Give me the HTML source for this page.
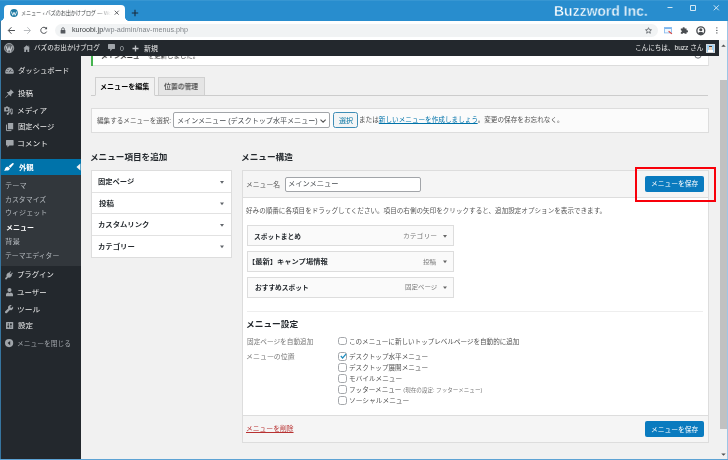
<!DOCTYPE html>
<html lang="ja">
<head>
<meta charset="utf-8">
<title>メニュー ‹ バズのお出かけブログ — WordPress</title>
<style>
html,body{margin:0;padding:0;}
body{width:728px;height:460px;overflow:hidden;position:relative;background:#f1f1f1;
 font-family:"Liberation Sans","Noto Sans CJK JP",sans-serif;font-size:7px;color:#444;}
.a{position:absolute;box-sizing:border-box;}
.t{position:absolute;white-space:nowrap;line-height:1;transform-origin:0 50%;will-change:transform;}
.b{font-weight:bold;}
svg{position:absolute;overflow:visible;}
/* chrome */
#titlebar{left:0;top:0;width:728px;height:21px;background:#288dce;}
#tab{left:4px;top:4.5px;width:121px;height:17.5px;background:#fff;border-radius:4px 4px 0 0;}
#toolbar{left:0;top:21px;width:728px;height:19px;background:#fff;}
#omni{left:54.6px;top:24px;width:603.4px;height:13px;border-radius:7px;background:#f1f3f4;}
/* wp */
#adminbar{left:0;top:40px;width:719px;height:16px;background:#23282d;}
#sidebar{left:0;top:56px;width:80.5px;height:404px;background:#23282d;}
#submenu{left:0;top:175px;width:80.5px;height:91px;background:#32373c;}
#cur{left:0;top:158.5px;width:80.5px;height:16.5px;background:#0073aa;}
.sm{color:#eee;font-size:7.5px;left:18px;}
.ss{color:#b4b9be;font-size:7px;left:6px;}
.box{background:#fff;border:1px solid #ddd;}
.mi{left:247px;width:207px;height:21px;background:#fafafa;border:1px solid #ddd;}
.cb{width:8.8px;height:8.8px;background:#fff;border:1px solid #a4a7ab;border-radius:2.6px;left:338.4px;}
.btn{background:#0a7bbf;border-radius:2px;color:#fff;}
</style>
</head>
<body>
<!-- ===== browser chrome ===== -->
<div class="a" id="titlebar"></div>
<div class="a" style="left:0;top:0;width:728px;height:1px;background:#3796d2"></div>
<div class="a" id="tab"></div>
<div class="a" style="left:0;top:17px;width:4px;height:4px;background:radial-gradient(circle at 0 0,#288dce 3.6px,#fff 4.2px)"></div>
<div class="a" style="left:125px;top:17px;width:4px;height:4px;background:radial-gradient(circle at 100% 0,#288dce 3.6px,#fff 4.2px)"></div>
<svg style="left:10.4px;top:8.9px" width="8" height="8" viewBox="0 0 8 8"><circle cx="4" cy="4" r="3.9" fill="#1f7ba3"/><path d="M1.3 2.5L2.8 6.3L4 3.2L5.2 6.3L6.7 2.5" fill="none" stroke="#fff" stroke-width=".8" stroke-linejoin="miter"/></svg>
<svg style="left:113.8px;top:10.2px" width="5.4" height="5.4" viewBox="0 0 6 6"><path d="M.8 .8L5.2 5.2M5.2 .8L.8 5.2" stroke="#45494d" stroke-width=".95"/></svg>
<svg style="left:131px;top:9px" width="8" height="8" viewBox="0 0 8 8"><path d="M4 .8V7.2M.8 4H7.2" stroke="#1b2b3a" stroke-width="1.1"/></svg>
<svg style="left:667px;top:4px" width="60" height="8" viewBox="0 0 60 8"><path d="M0.5 3.5H5.5" stroke="#d4e8f5" stroke-width="1"/><path d="M23.5 1.5H28.5V6.5H23.5Z" fill="none" stroke="#d4e8f5" stroke-width="1"/><path d="M46.8 1.3L51.8 6.3M51.8 1.3L46.8 6.3" stroke="#d4e8f5" stroke-width="1"/></svg>

<div class="a" id="toolbar"></div>
<svg style="left:6.5px;top:26.4px" width="46" height="9" viewBox="0 0 46.4 9"><path d="M8 4.5H1.5M4.5 1.2L1.3 4.5L4.5 7.8" fill="none" stroke="#4a4d51" stroke-width="1"/><path d="M17 4.5H23.5M20.5 1.2L23.7 4.5L20.5 7.8" fill="none" stroke="#b9bcbf" stroke-width="1"/><path d="M39.6 2.4A3.1 3.1 0 1 0 40 5.6" fill="none" stroke="#4a4d51" stroke-width="1"/><path d="M40.4 .6V3.2H37.8Z" fill="#4a4d51"/></svg>
<div class="a" id="omni"></div>
<svg style="left:60.2px;top:27.2px" width="6" height="7" viewBox="0 0 6 7"><rect x=".6" y="3" width="4.8" height="3.6" rx=".5" fill="#55595e"/><path d="M1.7 3V2A1.3 1.3 0 0 1 4.3 2V3" fill="none" stroke="#55595e" stroke-width=".8"/></svg>
<svg style="left:645.2px;top:26.9px" width="7" height="7" viewBox="0 0 9 9"><path d="M4.5 .9L5.6 3.4L8.3 3.6L6.2 5.4L6.9 8L4.5 6.6L2.1 8L2.8 5.4L.7 3.6L3.4 3.4Z" fill="none" stroke="#555a5f" stroke-width="1"/></svg>
<svg style="left:664px;top:27px" width="9" height="7.5" viewBox="0 0 9 7.5"><rect x=".5" y=".5" width="7" height="5.4" fill="#f2f8fe" stroke="#8ebff0" stroke-width=".9"/><rect x=".5" y=".5" width="7" height="1.5" fill="#7db5ee"/><path d="M4.6 4.2L8 6.9" stroke="#e0433a" stroke-width="1.1"/></svg>
<svg style="left:680.2px;top:26.2px" width="8.2" height="8.2" viewBox="0 0 10 10"><path d="M1 3.2H3.3A1.3 1.3 0 1 1 5.7 3.2H8V5.3A1.3 1.3 0 1 1 8 7.7V9.6H5.8A1.2 1.2 0 1 0 3.4 9.6H1V7.6A1.2 1.2 0 1 0 1 5.2Z" fill="#4a4d51"/></svg>
<svg style="left:695.8px;top:25.7px" width="9.6" height="9.6" viewBox="0 0 11 11"><circle cx="5.5" cy="5.5" r="4.5" fill="#fff" stroke="#4a4d51" stroke-width="1.6"/><circle cx="5.5" cy="4.3" r="1.8" fill="#4a4d51"/><path d="M2.2 8.3C3 6.4 8 6.4 8.8 8.3C7.6 10.2 3.4 10.2 2.2 8.3Z" fill="#4a4d51"/></svg>
<svg style="left:715.7px;top:27.4px" width="1.7" height="6.8" viewBox="0 0 2 8"><circle cx="1" cy="1" r=".8" fill="#4a4d51"/><circle cx="1" cy="4" r=".8" fill="#4a4d51"/><circle cx="1" cy="7" r=".8" fill="#4a4d51"/></svg>

<!-- ===== page bg and scrollbar ===== -->
<div class="a" style="left:719px;top:40px;width:9px;height:420px;background:#f1f1f1"></div>
<div class="a" style="left:720px;top:80px;width:7px;height:349px;background:#c1c1c1"></div>
<svg style="left:720.7px;top:43.6px" width="5" height="3" viewBox="0 0 6 4"><path d="M0 3.5L3 .5L6 3.5Z" fill="#505050"/></svg>
<svg style="left:720.7px;top:453px" width="5" height="3" viewBox="0 0 6 4"><path d="M0 .5L3 3.5L6 .5Z" fill="#505050"/></svg>

<!-- ===== WP admin bar ===== -->
<div class="a" id="adminbar"></div>
<svg style="left:3.8px;top:42.5px" width="10.2" height="10.2" viewBox="0 0 10 10"><circle cx="5" cy="5" r="4.55" fill="#62676c" stroke="#a3a8ad" stroke-width=".9"/><path d="M1.9 3.1L3.7 7.9L5 4.3L6.3 7.9L8.1 3.1" fill="none" stroke="#c0c4c8" stroke-width="1.15" stroke-linejoin="miter"/></svg>
<svg style="left:22.8px;top:44.6px" width="7.4" height="7.2" viewBox="0 0 9 9"><path d="M4.5 .2L.2 4.2H1.4V8.8H3.6V5.8H5.4V8.8H7.6V4.2H8.8Z" fill="#a0a5aa"/><path d="M6.4 .8H7.6V2.6L6.4 1.6Z" fill="#a0a5aa"/></svg>
<svg style="left:107.6px;top:44px" width="7" height="7.4" viewBox="0 0 7 7.4"><path d="M.5 0H6.5Q7 0 7 .5V4.6Q7 5.1 6.5 5.1H4.2L2.2 7.2V5.1H.5Q0 5.1 0 4.6V.5Q0 0 .5 0Z" fill="#a0a5aa"/></svg>
<svg style="left:132px;top:45px" width="7" height="7" viewBox="0 0 7 7"><path d="M3.5 .5V6.5M.5 3.5H6.5" stroke="#c3c6c9" stroke-width="1.3"/></svg>
<div class="a" style="left:706px;top:44px;width:9px;height:9px;background:#9fd0f2;border:1px solid #d5d8db"></div>
<div class="a" style="left:709px;top:46px;width:3px;height:4px;background:#f0d2b8;border-top:1px solid #4b3a2e"></div>
<div class="a" style="left:708px;top:50px;width:5px;height:2px;background:#fff"></div>

<!-- ===== WP sidebar ===== -->
<div class="a" id="sidebar"></div>
<div class="a" id="submenu"></div>
<div class="a" id="cur"></div>
<svg style="left:76.3px;top:162.8px" width="4.4" height="8" viewBox="0 0 5 8"><path d="M5 0L.5 4L5 8Z" fill="#f1f1f1"/></svg>
<!-- sidebar icons -->
<svg style="left:5.2px;top:67px" width="9" height="6.8" viewBox="0 0 9 6.8"><path d="M.2 5.2A4.3 4.6 0 0 1 8.8 5.2C8.8 6 8.4 6.6 7.8 6.8H1.2C.6 6.6 .2 6 .2 5.2Z" fill="#a0a5aa"/><path d="M4.3 5.2L6 2.6" stroke="#23282d" stroke-width=".8"/><circle cx="2" cy="4.4" r=".5" fill="#23282d"/><circle cx="3" cy="2.4" r=".5" fill="#23282d"/><circle cx="7" cy="4.4" r=".5" fill="#23282d"/></svg>
<svg style="left:4.8px;top:88.5px" width="9.2" height="9.2" viewBox="0 0 9.2 9.2"><path d="M5.7 .3L8.9 3.5L7.7 3.9L6.3 5.5L6.1 7.6L3.9 5.7L.6 9L.2 8.6L3.5 5.3L1.6 3.1L3.7 2.9L5.3 1.5Z" fill="#a0a5aa"/></svg>
<svg style="left:4.3px;top:106px" width="9" height="9" viewBox="0 0 9 9"><path d="M.2 1.2H1.6L2.1 .4H3.9L4.4 1.2H5.6V5.4H.2Z" fill="#a0a5aa"/><circle cx="2.9" cy="3.3" r="1.1" fill="#23282d"/><path d="M4.4 6.2V8.2M8.2 3V7.6M4.4 6.2H6.4V3H8.2" fill="none" stroke="#a0a5aa" stroke-width=".9"/><circle cx="3.7" cy="8" r="1" fill="#a0a5aa"/><circle cx="7.5" cy="7.5" r="1" fill="#a0a5aa"/></svg>
<svg style="left:6px;top:123.4px" width="7.2" height="8" viewBox="0 0 7.2 8"><path d="M1.9 0H7.2V6.3H1.9Z" fill="#a0a5aa"/><path d="M.5 1.6V7.6H5.4" fill="none" stroke="#a0a5aa" stroke-width="1"/></svg>
<svg style="left:6px;top:140.3px" width="7.6" height="7.6" viewBox="0 0 7.6 7.6"><path d="M.4 0H7.2Q7.6 0 7.6 .4V5Q7.6 5.4 7.2 5.4H3.4L1.4 7.5V5.4H.4Q0 5.4 0 5V.4Q0 0 .4 0Z" fill="#a0a5aa"/></svg>
<svg style="left:4.3px;top:162.5px" width="9.8" height="8" viewBox="0 0 9.8 8"><path d="M9.6 .2L9.8 .9L6.4 4.9L4.6 3.3L8.6 .1Z" fill="#fff"/><path d="M4.1 3.7L6 5.4C5.6 6.8 4.2 7.6 2.6 7.4C1.6 7.3 .8 7.6 .1 8C.9 7 .8 6 1.4 5C2 4 3.2 3.5 4.1 3.7Z" fill="#fff"/></svg>
<svg style="left:5.4px;top:270.8px" width="7.8" height="8.4" viewBox="0 0 7.8 8.4"><path d="M5.2 .2L6 .8L4.9 2.5L5.9 3.3L7.1 1.6L7.8 2.2L6.6 3.9L7 4.3L6.2 5.5C5.4 6.6 4.2 7 3 6.6L1.4 8.4L.3 8.2L.1 7.2L1.7 5.6C1.2 4.6 1.4 3.4 2.3 2.6L3.3 1.6L3.9 2Z" fill="#a0a5aa"/></svg>
<svg style="left:5.8px;top:287.8px" width="7" height="8.2" viewBox="0 0 7 8.2"><circle cx="3.5" cy="2" r="2" fill="#a0a5aa"/><path d="M0 8.2V6.6C0 5.2 1.4 4.4 2.4 4.4L3.5 5.2L4.6 4.4C5.6 4.4 7 5.2 7 6.6V8.2Z" fill="#a0a5aa"/></svg>
<svg style="left:5.4px;top:305.2px" width="8.2" height="8.2" viewBox="0 0 8.2 8.2"><path d="M8 1.6C8.5 3 8 4.4 6.8 5C6.1 5.3 5.4 5.3 4.8 5.1L2 8C1.6 8.4 .9 8.4 .4 7.9C-.1 7.4 -.1 6.7 .3 6.3L3.2 3.5C2.9 2.7 3 1.8 3.6 1.1C4.4 .1 5.6 -.2 6.7 .2L5.2 1.8L5.5 2.8L6.5 3.1Z" fill="#a0a5aa"/></svg>
<svg style="left:5.9px;top:322.4px" width="7.2" height="7" viewBox="0 0 7.2 7"><rect x="0" y="0" width="7.2" height="7" rx=".6" fill="#a0a5aa"/><path d="M2.3 1V6M4.9 1V6" stroke="#23282d" stroke-width=".7"/><rect x="1.5" y="3.8" width="1.6" height="1.2" fill="#23282d"/><rect x="4.1" y="1.8" width="1.6" height="1.2" fill="#23282d"/></svg>
<svg style="left:5.4px;top:338.9px" width="8.2" height="8.2" viewBox="0 0 8.2 8.2"><circle cx="4.1" cy="4.1" r="4.1" fill="#a0a5aa"/><path d="M5.2 2L2.6 4.1L5.2 6.2Z" fill="#23282d"/></svg>

<!-- ===== content ===== -->
<div class="a" style="left:0;top:56px;width:719px;height:12px;overflow:hidden">
<div class="a" style="left:91.4px;top:-4px;width:617.6px;height:13.6px;background:#fff;border-bottom:1px solid #dcdcdc;border-right:1px solid #e2e2e2"></div>
<div class="a" style="left:91.4px;top:-4px;width:1.8px;height:13.6px;background:#46b450"></div>
<div class="t" style="left:100.6px;top:-4px;font-size:7px;color:#333;transform:scaleX(.92)"><b>メインメニュー</b> を更新しました。</div>
<svg style="left:694px;top:-5px" width="8" height="8" viewBox="0 0 8 8"><circle cx="4" cy="4" r="3.2" fill="none" stroke="#72777c" stroke-width="1"/></svg>
</div>

<!-- tabs -->
<div class="a" style="left:91.4px;top:95px;width:617px;height:1px;background:#ccc"></div>
<div class="a" style="left:95px;top:77px;width:60px;height:19px;background:#f1f1f1;border:1px solid #d0d0d0;border-bottom:1px solid #f1f1f1"></div>
<div class="a" style="left:158px;top:77px;width:47px;height:18px;background:#e5e5e5;border:1px solid #d0d0d0;border-bottom:none"></div>

<!-- select menu box -->
<div class="a" style="left:91.4px;top:107.5px;width:617.6px;height:25.5px;background:#fbfbfb;border:1px solid #ddd"></div>
<div class="a" style="left:173.3px;top:112.4px;width:156.5px;height:15.6px;background:#fff;border:1px solid #a2a5a9;border-radius:2px"></div>
<svg style="left:320px;top:118.6px" width="6.2" height="4" viewBox="0 0 6.2 4"><path d="M.5 .6L3.1 3.2L5.7 .6" fill="none" stroke="#555" stroke-width="1.1"/></svg>
<div class="a" style="left:333.2px;top:112.2px;width:24.8px;height:15.8px;background:#f3f5f6;border:1px solid #3f8db6;border-radius:2.5px"></div>

<!-- headings -->

<!-- accordion -->
<div class="a box" style="left:91.4px;top:170px;width:140.4px;height:88px"></div>
<div class="a" style="left:92.4px;top:192.3px;width:138.4px;height:1px;background:#e2e2e2"></div>
<div class="a" style="left:92.4px;top:213.3px;width:138.4px;height:1px;background:#e2e2e2"></div>
<div class="a" style="left:92.4px;top:235.3px;width:138.4px;height:1px;background:#e2e2e2"></div>
<svg style="left:220.1px;top:180.8px" width="4" height="70" viewBox="0 0 4 70"><path d="M0 0H4L2 2.7ZM0 21.5H4L2 24.2ZM0 43H4L2 45.7ZM0 64.5H4L2 67.2Z" fill="#62676c"/></svg>

<!-- menu structure panel -->
<div class="a" style="left:241.5px;top:170px;width:467.5px;height:273px;background:#fff;border:1px solid #ddd"></div>
<div class="a" style="left:242.5px;top:171px;width:465.5px;height:27px;background:#f5f5f5;border-bottom:1px solid #ddd"></div>
<div class="a" style="left:242.5px;top:414.5px;width:465.5px;height:27.5px;background:#f5f5f5;border-top:1px solid #ddd"></div>
<div class="a" style="left:285px;top:176.5px;width:136px;height:15.3px;background:#fff;border:1px solid #a2a5a9;border-radius:2px"></div>
<div class="a btn" style="left:645px;top:176px;width:58.5px;height:16px"></div>
<div class="a" style="left:635px;top:167px;width:81px;height:35px;border:2px solid #f8000a"></div>


<div class="a mi" style="top:225px"></div>
<div class="a mi" style="top:251px"></div>
<div class="a mi" style="top:277px"></div>
<svg style="left:443.4px;top:234.6px" width="5" height="56" viewBox="0 0 5 56"><path d="M0 0H4L2 2.7ZM0 25.6H4L2 28.3ZM0 51.4H4L2 54.1Z" fill="#666"/></svg>

<div class="a" style="left:247px;top:311px;width:456px;height:1px;background:#eee"></div>
<div class="a cb" style="top:336.6px"></div>
<div class="a cb" style="top:352.4px"></div>
<div class="a cb" style="top:363.3px"></div>
<div class="a cb" style="top:374.2px"></div>
<div class="a cb" style="top:385.3px"></div>
<div class="a cb" style="top:396.4px"></div>
<svg style="left:339.6px;top:353.4px" width="7" height="6" viewBox="0 0 7 6"><path d="M.8 3L2.6 5L6.2 .8" fill="none" stroke="#1e8cbe" stroke-width="1.2"/></svg>

<div class="a btn" style="left:645px;top:421px;width:58.5px;height:16px"></div>

<span class="t" style="left:21.18px;top:10.3px;font-size:6px;color:#3c4043;transform:scaleX(0.8394);">メニュー ‹ バズのお出かけブログ — Wc</span>
<span class="t" style="left:554.47px;top:3.6px;font-size:14px;color:#fff;font-weight:700;transform:scaleX(0.9948);-webkit-text-stroke:.4px #288dce;">Buzzword Inc.</span>
<span class="t" style="left:71.6px;top:26.85px;font-size:6.3px;color:#80868b;transform:scaleX(1.1430);"><span style="color:#3c4043">kuroobi.jp</span>/wp-admin/nav-menus.php</span>
<span class="t" style="left:34.27px;top:45.45px;font-size:6.5px;color:#eee;transform:scaleX(1.0118);">バズのお出かけブログ</span>
<span class="t" style="left:119.86px;top:45.75px;font-size:6.5px;color:#b4b9be;transform:scaleX(1.0672);">0</span>
<span class="t" style="left:143.69px;top:45.75px;font-size:6.5px;color:#eee;transform:scaleX(1.0734);">新規</span>
<span class="t" style="left:635.3px;top:44.55px;font-size:6.5px;color:#eee;transform:scaleX(1.0123);">こんにちは、buzz さん</span>
<span class="t" style="left:17.66px;top:66.7px;font-size:7px;color:#eee;transform:scaleX(1.0491);">ダッシュボード</span>
<span class="t" style="left:17.56px;top:89.5px;font-size:7px;color:#eee;transform:scaleX(1.0637);">投稿</span>
<span class="t" style="left:17.47px;top:106.5px;font-size:7px;color:#eee;transform:scaleX(1.0926);">メディア</span>
<span class="t" style="left:17.66px;top:123.2px;font-size:7px;color:#eee;transform:scaleX(1.0378);">固定ページ</span>
<span class="t" style="left:16.56px;top:139.9px;font-size:7px;color:#eee;transform:scaleX(1.1078);">コメント</span>
<span class="t" style="left:18.68px;top:163.5px;font-size:7px;color:#fff;font-weight:700;transform:scaleX(1.0512);">外観</span>
<span class="t" style="left:4.67px;top:183.35px;font-size:6.5px;color:#b4b9be;transform:scaleX(1.1091);">テーマ</span>
<span class="t" style="left:4.53px;top:196.75px;font-size:6.5px;color:#b4b9be;transform:scaleX(1.0637);">カスタマイズ</span>
<span class="t" style="left:5px;top:210.25px;font-size:6.5px;color:#b4b9be;transform:scaleX(1.0857);">ウィジェット</span>
<span class="t" style="left:5.78px;top:224.75px;font-size:6.5px;color:#fff;font-weight:700;transform:scaleX(1.0718);">メニュー</span>
<span class="t" style="left:5.17px;top:239.05px;font-size:6.5px;color:#b4b9be;transform:scaleX(1.1643);">背景</span>
<span class="t" style="left:4.53px;top:253.05px;font-size:6.5px;color:#b4b9be;transform:scaleX(1.0528);">テーマエディター</span>
<span class="t" style="left:17.39px;top:271.1px;font-size:7px;color:#eee;transform:scaleX(1.0516);">プラグイン</span>
<span class="t" style="left:17.36px;top:288.5px;font-size:7px;color:#eee;transform:scaleX(1.0615);">ユーザー</span>
<span class="t" style="left:17.08px;top:305.6px;font-size:7px;color:#eee;transform:scaleX(1.1086);">ツール</span>
<span class="t" style="left:17.67px;top:322.2px;font-size:7px;color:#eee;transform:scaleX(1.0720);">設定</span>
<span class="t" style="left:17.14px;top:340.75px;font-size:6.5px;color:#a0a5aa;transform:scaleX(1.0394);">メニューを閉じる</span>
<span class="t" style="left:99.97px;top:82.5px;font-size:7px;color:#000;font-weight:700;transform:scaleX(1.0084);">メニューを編集</span>
<span class="t" style="left:164.13px;top:82.5px;font-size:7px;color:#555;font-weight:700;transform:scaleX(0.9770);">位置の管理</span>
<span class="t" style="left:96.6px;top:117.75px;font-size:6.5px;color:#505050;transform:scaleX(1.0122);">編集するメニューを選択:</span>
<span class="t" style="left:176.59px;top:117px;font-size:7px;color:#454a4f;transform:scaleX(1.0090);">メインメニュー (デスクトップ水平メニュー)</span>
<span class="t" style="left:339.3px;top:117.75px;font-size:6.5px;color:#0071a1;transform:scaleX(1.0838);">選択</span>
<span class="t" style="left:359.32px;top:116.95px;font-size:6.5px;color:#505050;transform:scaleX(1.0173);">または<span style="color:#0073aa;text-decoration:underline">新しいメニューを作成しましょう</span>。変更の保存をお忘れなく。</span>
<span class="t" style="left:90.19px;top:153.27px;font-size:8.45px;color:#23282d;font-weight:700;transform:scaleX(1.0194);">メニュー項目を追加</span>
<span class="t" style="left:240.91px;top:153.27px;font-size:8.45px;color:#23282d;font-weight:700;transform:scaleX(1.0245);">メニュー構造</span>
<span class="t" style="left:98.29px;top:178.85px;font-size:6.5px;color:#23282d;font-weight:700;transform:scaleX(1.1207);">固定ページ</span>
<span class="t" style="left:98.69px;top:200.75px;font-size:6.5px;color:#23282d;font-weight:700;transform:scaleX(1.1547);">投稿</span>
<span class="t" style="left:97.83px;top:221.85px;font-size:6.5px;color:#23282d;font-weight:700;transform:scaleX(1.1297);">カスタムリンク</span>
<span class="t" style="left:97.84px;top:243.75px;font-size:6.5px;color:#23282d;font-weight:700;transform:scaleX(1.1318);">カテゴリー</span>
<span class="t" style="left:246.16px;top:181.85px;font-size:6.5px;color:#555;transform:scaleX(1.0465);">メニュー名</span>
<span class="t" style="left:288.04px;top:180px;font-size:7px;color:#454a4f;transform:scaleX(1.0368);">メインメニュー</span>
<span class="t" style="left:650.66px;top:181.25px;font-size:6.5px;color:#fff;transform:scaleX(1.0407);">メニューを保存</span>
<span class="t" style="left:246.09px;top:207.75px;font-size:6.5px;color:#555;transform:scaleX(1.0111);">好みの順番に各項目をドラッグしてください。項目の右側の矢印をクリックすると、追加設定オプションを表示できます。</span>
<span class="t" style="left:254.06px;top:234.25px;font-size:6.5px;color:#23282d;font-weight:700;transform:scaleX(1.0299);">スポットまとめ</span>
<span class="t" style="left:247.82px;top:258.85px;font-size:6.5px;color:#23282d;font-weight:700;transform:scaleX(1.1173);">【最新】キャンプ場情報</span>
<span class="t" style="left:254.56px;top:284.75px;font-size:6.5px;color:#23282d;font-weight:700;transform:scaleX(1.0319);">おすすめスポット</span>
<span class="t" style="left:402.85px;top:233px;font-size:6px;color:#777;transform:scaleX(1.1335);">カテゴリー</span>
<span class="t" style="left:422.9px;top:258.5px;font-size:6px;color:#777;transform:scaleX(1.1031);">投稿</span>
<span class="t" style="left:404.64px;top:284.2px;font-size:6px;color:#777;transform:scaleX(1.0808);">固定ページ</span>
<span class="t" style="left:246.31px;top:319.77px;font-size:8.45px;color:#23282d;font-weight:700;transform:scaleX(1.0303);">メニュー設定</span>
<span class="t" style="left:247.07px;top:338.75px;font-size:6.5px;color:#777;transform:scaleX(1.0227);">固定ページを自動追加</span>
<span class="t" style="left:246.17px;top:353.75px;font-size:6.5px;color:#777;transform:scaleX(1.0709);">メニューの位置</span>
<span class="t" style="left:348.81px;top:338.75px;font-size:6.5px;color:#505050;transform:scaleX(1.0092);">このメニューに新しいトップレベルページを自動的に追加</span>
<span class="t" style="left:349.45px;top:353.75px;font-size:6.5px;color:#505050;transform:scaleX(1.0124);">デスクトップ水平メニュー</span>
<span class="t" style="left:349.45px;top:365.25px;font-size:6.5px;color:#505050;transform:scaleX(1.0124);">デスクトップ展開メニュー</span>
<span class="t" style="left:349.42px;top:375.85px;font-size:6.5px;color:#505050;transform:scaleX(1.0198);">モバイルメニュー</span>
<span class="t" style="left:349.47px;top:387.25px;font-size:6.5px;color:#505050;transform:scaleX(1.0136);">フッターメニュー <span style="font-size:5.5px;color:#777">(現在の設定: フッターメニュー)</span></span>
<span class="t" style="left:349.19px;top:398.25px;font-size:6.5px;color:#505050;transform:scaleX(1.0330);">ソーシャルメニュー</span>
<span class="t" style="left:246.17px;top:425.75px;font-size:6.5px;color:#b83232;transform:scaleX(1.0444);text-decoration:underline;">メニューを削除</span>
<span class="t" style="left:650.66px;top:426.75px;font-size:6.5px;color:#fff;transform:scaleX(1.0407);">メニューを保存</span>
<div class="a" style="left:98px;top:6px;width:13px;height:14px;background:linear-gradient(90deg,rgba(255,255,255,0),#fff)"></div>
<!-- window border -->
<div class="a" style="left:0;top:21px;width:1px;height:439px;background:#36759f"></div>
<div class="a" style="left:727px;top:21px;width:1px;height:439px;background:#9cc6e6"></div>
<div class="a" style="left:0;top:459px;width:728px;height:1px;background:#5da3d4"></div>
</body>
</html>
